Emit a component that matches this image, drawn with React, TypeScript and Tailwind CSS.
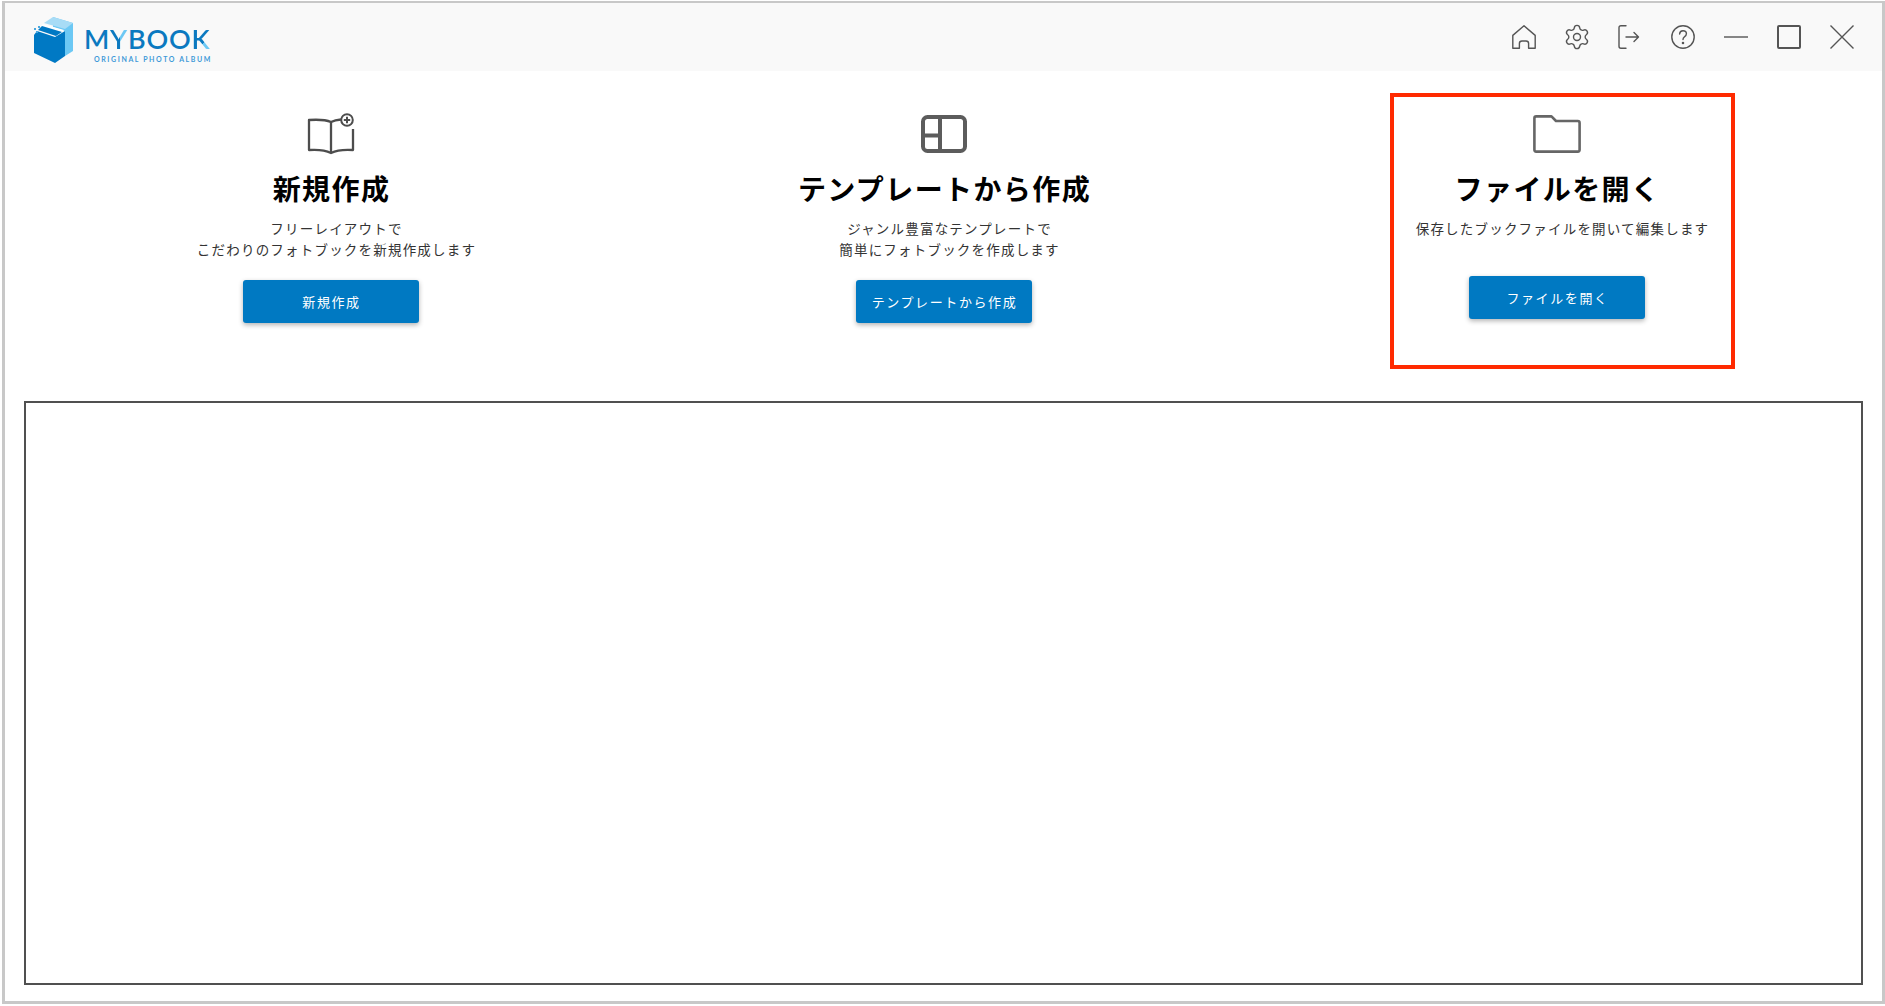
import React from 'react';
import { Settings } from 'lucide-react';

const jp = { fontFamily: '"Noto Sans CJK JP", "Noto Sans", sans-serif' };
const lato = { fontFamily: 'Lato, sans-serif' };

const Logo = () => (
  <div className="flex items-start">
    <svg width="60" height="58" viewBox="0 0 60 58" className="mt-[5px] ml-[23px] shrink-0">
      <path d="M25 6 L45 12 V40 L37 45 V20 L25 16 Z" fill="#6cc8f4" />
      <path d="M25 6 L45 12 L37 18 L16 12 Z" fill="#a8dcf6" />
      <path d="M15 13 L36 19 L34 21 L13 15 Z" fill="#ffffff" />
      <path d="M14 15 L34 21 L28 25 L10 19 Z" fill="#0079c4" />
      <path d="M6 24 L9 20 L27 26 L37 20 V45 L27 52 L6 42 Z" fill="#0079c4" />
      <path d="M6 17 h2 v2 h-2z M10 15 h2 v2 h-2z M8 20 h2 v2 h-2z" fill="#4aa8e0" />
    </svg>
    <div className="-ml-[4px] mt-[18px] flex flex-col items-start" style={lato}>
      <div className="text-[27px] leading-[30px] font-semibold tracking-[0.8px] text-[#0b79c0]">
        M<span className="inline-block bg-[linear-gradient(90deg,#0b79c0_54%,#6cc8f4_54%)] bg-clip-text text-transparent">Y</span>BOO
        <span className="inline-block bg-[linear-gradient(135deg,#0b79c0_62%,#6cc8f4_62%)] bg-clip-text text-transparent">K</span>
      </div>
      <div className="ml-[10px] mt-[1px] text-[7px] leading-[8px] font-bold tracking-[1.6px] text-[#3f9ad8] whitespace-nowrap">
        ORIGINAL PHOTO ALBUM
      </div>
    </div>
  </div>
);

const HeaderIcons = () => (
  <div className="flex items-center gap-[29px] pr-[28px] text-[#555555]">
    <svg width="24" height="24" viewBox="0 0 24 24" fill="none" stroke="currentColor" strokeWidth="1.4" strokeLinejoin="round">
      <path d="M0.8 23.3 V10.4 L12 0.8 L23.2 10.4 V23.3 H16.6 V18.5 Q16.6 16 14 16 H10 Q7.4 16 7.4 18.5 V23.3 Z" />
    </svg>
    <Settings size={28} strokeWidth={1.2} className="-mx-[2px]" />
    <svg width="24" height="24" viewBox="0 0 24 24" fill="none" stroke="currentColor" strokeWidth="1.4" strokeLinecap="round" strokeLinejoin="round">
      <path d="M8 0.8 H3 Q1 0.8 1 2.8 V21.2 Q1 23.2 3 23.2 H8" />
      <path d="M8 12 H20.5 M16 7.5 L20.5 12 L16 16.5" />
    </svg>
    <svg width="24" height="24" viewBox="0 0 24 24" fill="none" stroke="currentColor" strokeWidth="1.4" strokeLinecap="round">
      <circle cx="12" cy="12" r="11.2" />
      <path d="M8.6 9 Q8.8 5.8 12 5.8 Q15.4 5.8 15.4 8.8 Q15.4 10.6 13.4 11.8 Q12 12.7 12 14.6" />
      <circle cx="12" cy="18" r="0.6" fill="currentColor" />
    </svg>
    <svg width="24" height="24" viewBox="0 0 24 24" fill="none" stroke="currentColor" strokeWidth="1.4">
      <path d="M0 12 H24" />
    </svg>
    <div className="w-[24px] h-[24px] border-2 border-[#555555] rounded-[2px]" />
    <svg width="24" height="24" viewBox="0 0 24 24" fill="none" stroke="currentColor" strokeWidth="1.4">
      <path d="M0.5 0.5 L23.5 23.5 M23.5 0.5 L0.5 23.5" />
    </svg>
  </div>
);

const BookIcon = () => (
  <svg width="48" height="42" viewBox="0 0 48 42" fill="none" stroke="#4d4d4d" strokeWidth="2.3" strokeLinejoin="round">
    <path d="M24 9 Q17 6 2 7 V37 Q16 36 24 40 Q32 36 46 37 V16" />
    <path d="M24 9 V40" />
    <path d="M24 9 Q28 7 34 6.5" />
    <circle cx="40" cy="7" r="5.8" fill="#ffffff" strokeWidth="2" />
    <path d="M36.8 7 H43.2 M40 3.8 V10.2" strokeWidth="2" />
  </svg>
);

const TemplateIcon = () => (
  <svg width="46" height="38" viewBox="0 0 46 38" fill="none" stroke="#5c5c5c" strokeWidth="4">
    <rect x="2" y="2" width="42" height="34" rx="4.5" />
    <path d="M19 2 V36 M2 20.5 H19" />
  </svg>
);

const FolderIcon = () => (
  <svg width="48" height="38" viewBox="0 0 48 38" fill="none" stroke="#666666" strokeWidth="2.6" strokeLinejoin="round">
    <path d="M1.4 3.2 Q1.4 1.4 3.2 1.4 H18.5 L23 6 H44.8 Q46.6 6 46.6 8 V34.8 Q46.6 36.6 44.8 36.6 H3.2 Q1.4 36.6 1.4 34.8 Z" />
  </svg>
);

type OptionProps = {
  icon: React.ReactNode;
  title: string;
  lines: string[];
  button: string;
  buttonGap: string;
};

const Option = ({ icon, title, lines, button, buttonGap }: OptionProps) => (
  <div className="flex flex-col items-center" style={jp}>
    <div className="h-[42px] flex items-center justify-center">{icon}</div>
    <h2 className="mt-[14px] pl-[2px] text-[28px] leading-[38px] font-bold tracking-[1.4px] text-black whitespace-nowrap">{title}</h2>
    <div className={`mt-[11px] pl-[12px] text-[13.5px] leading-[21px] tracking-[1.2px] text-[#333333] text-center whitespace-nowrap ${buttonGap}`}>
      {lines.map(l => (
        <p key={l}>{l}</p>
      ))}
    </div>
    <button className="w-[176px] h-[43px] pl-[2px] rounded-[3px] bg-[#0079c2] text-white text-[13px] tracking-[1.6px] shadow-[0_2px_5px_rgba(0,0,0,0.3)]">
      {button}
    </button>
  </div>
);

const App: React.FC = () => {
  return (
    <div className="w-[1885px] h-[1006px] bg-white pl-[2px] pt-[1px] pb-[2px] overflow-hidden">
      <div className="h-full border-[3px] border-t-[2px] border-[#c8c8c8] flex flex-col">
        <header className="h-[68px] shrink-0 bg-[#f9f9f9] flex items-center justify-between">
          <Logo />
          <HeaderIcons />
        </header>

        <div className="grid grid-cols-3 px-[19px] pt-[22px] h-[298px] shrink-0">
          <div className="pt-[20px]">
            <Option
              icon={<BookIcon />}
              title="新規作成"
              lines={['フリーレイアウトで', 'こだわりのフォトブックを新規作成します']}
              button="新規作成"
              buttonGap="mb-[20px]"
            />
          </div>
          <div className="pt-[20px]">
            <Option
              icon={<TemplateIcon />}
              title="テンプレートから作成"
              lines={['ジャンル豊富なテンプレートで', '簡単にフォトブックを作成します']}
              button="テンプレートから作成"
              buttonGap="mb-[20px]"
            />
          </div>
          <div className="flex justify-center">
            <div className="w-[345px] h-[276px] ml-[12px] border-[4px] border-[#ff2a00] pt-[16px] pr-[12px]">
              <Option
                icon={<FolderIcon />}
                title="ファイルを開く"
                lines={['保存したブックファイルを開いて編集します']}
                button="ファイルを開く"
                buttonGap="mb-[37px]"
              />
            </div>
          </div>
        </div>

        <div className="flex-1 mx-[19px] mt-[32px] mb-[16px] border-2 border-[#505050]" />
      </div>
    </div>
  );
};

export default App;
